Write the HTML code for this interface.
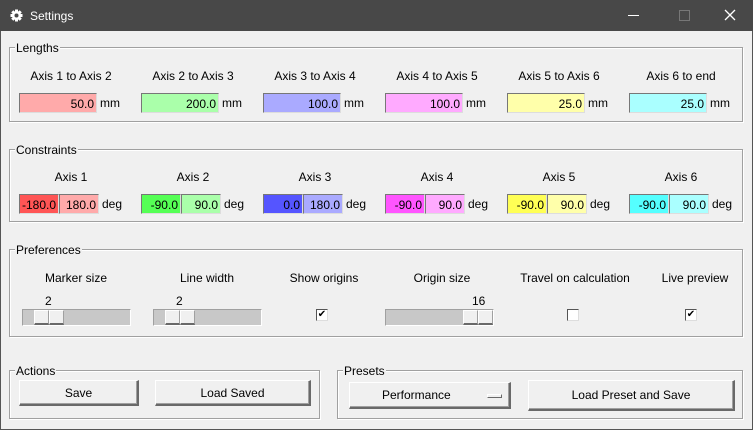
<!DOCTYPE html>
<html><head><style>
*{margin:0;padding:0;box-sizing:border-box}
body{width:753px;height:430px;background:#f0f0f0;font-family:"Liberation Sans",sans-serif;font-size:12px;color:#000;position:relative;overflow:hidden}
.a{position:absolute}
.tb{left:0;top:0;width:753px;height:31px;background:#484848;color:#fff}
.frame{left:0;top:31px;width:753px;height:399px;border:1px solid #555;border-top:none}
.grp{position:absolute;border:1px solid #a0a0a0;box-shadow:inset 1px 1px 0 #fff,1px 1px 0 #fff}
.gl{position:absolute;background:#f0f0f0;padding:0 1px;line-height:14px}
.lbl{position:absolute;text-align:center;width:122px;line-height:14px}
.e{position:absolute;height:20px;text-align:right;padding-right:2px;line-height:20px;border-top:1px solid #777;border-left:1px solid #777;border-bottom:1px solid #ddd;border-right:1px solid #ddd}
.u{position:absolute;line-height:21px}
.tr{position:absolute;height:17px;background:#c8c8c8;border-top:1px solid #a0a0a0;border-left:1px solid #a0a0a0;border-bottom:1px solid #fff;border-right:1px solid #fff}
.th{position:absolute;top:0;width:15px;height:15px;background:#f0f0f0;border-top:1px solid #fff;border-left:1px solid #fff;border-bottom:2px solid #696969;border-right:1px solid #a0a0a0}
.cb{position:absolute;width:12px;height:12px;background:#fff;border:1px solid #555;border-right-color:#ddd;border-bottom-color:#ddd;font-size:10px;line-height:10px;text-align:center}
.btn{position:absolute;background:#f0f0f0;border-top:1px solid #fff;border-left:1px solid #fff;border-right:2px solid #696969;border-bottom:2px solid #696969;text-align:center;box-shadow:inset -1px -1px 0 #a0a0a0}
</style></head><body>
<div class="a tb">
 <svg class="a" style="left:10px;top:9px" width="13" height="13" viewBox="0 0 13 13"><g fill="#fff"><circle cx="6.5" cy="6.5" r="4.5"/><rect x="5" y="0.5" width="3" height="12"/><rect x="0.5" y="5" width="12" height="3"/><rect x="5" y="0.5" width="3" height="12" transform="rotate(45 6.5 6.5)"/><rect x="5" y="0.5" width="3" height="12" transform="rotate(-45 6.5 6.5)"/></g><circle cx="6.5" cy="6.5" r="2" fill="#484848"/></svg>
 <div class="a" style="left:30px;top:9px;font-size:12px">Settings</div>
 <div class="a" style="left:628px;top:15px;width:11px;height:1px;background:#fff"></div>
 <div class="a" style="left:679px;top:10px;width:11px;height:11px;border:1px solid #777"></div>
 <svg class="a" style="left:724px;top:9px" width="12" height="12"><path d="M1 1L11 11M11 1L1 11" stroke="#fff" stroke-width="1.3"/></svg>
</div>
<div class="a frame"></div>

<div class="grp" style="left:9px;top:47px;width:734px;height:75px"></div>
<div class="gl" style="left:15px;top:41px">Lengths</div>
<div class="grp" style="left:9px;top:149px;width:734px;height:73px"></div>
<div class="gl" style="left:15px;top:143px">Constraints</div>
<div class="grp" style="left:9px;top:249px;width:734px;height:88px"></div>
<div class="gl" style="left:15px;top:243px">Preferences</div>
<div class="grp" style="left:9px;top:370px;width:311px;height:49px"></div>
<div class="gl" style="left:15px;top:364px">Actions</div>
<div class="grp" style="left:337px;top:370px;width:406px;height:49px"></div>
<div class="gl" style="left:343px;top:364px">Presets</div>

<div class="lbl" style="left:10px;top:69px">Axis 1 to Axis 2</div>
<div class="lbl" style="left:132px;top:69px">Axis 2 to Axis 3</div>
<div class="lbl" style="left:254px;top:69px">Axis 3 to Axis 4</div>
<div class="lbl" style="left:376px;top:69px">Axis 4 to Axis 5</div>
<div class="lbl" style="left:498px;top:69px">Axis 5 to Axis 6</div>
<div class="lbl" style="left:620px;top:69px">Axis 6 to end</div>
<div class="e" style="left:19px;top:93px;width:78px;background:#ffaaaa">50.0</div><div class="u" style="left:100px;top:93px">mm</div>
<div class="e" style="left:141px;top:93px;width:78px;background:#aaffaa">200.0</div><div class="u" style="left:222px;top:93px">mm</div>
<div class="e" style="left:263px;top:93px;width:78px;background:#aaaaff">100.0</div><div class="u" style="left:344px;top:93px">mm</div>
<div class="e" style="left:385px;top:93px;width:78px;background:#ffaaff">100.0</div><div class="u" style="left:466px;top:93px">mm</div>
<div class="e" style="left:507px;top:93px;width:78px;background:#ffffaa">25.0</div><div class="u" style="left:588px;top:93px">mm</div>
<div class="e" style="left:629px;top:93px;width:78px;background:#aaffff">25.0</div><div class="u" style="left:710px;top:93px">mm</div>

<div class="lbl" style="left:10px;top:170px">Axis 1</div>
<div class="lbl" style="left:132px;top:170px">Axis 2</div>
<div class="lbl" style="left:254px;top:170px">Axis 3</div>
<div class="lbl" style="left:376px;top:170px">Axis 4</div>
<div class="lbl" style="left:498px;top:170px">Axis 5</div>
<div class="lbl" style="left:620px;top:170px">Axis 6</div>
<div class="e" style="left:19px;top:194px;width:40px;background:#ff5555">-180.0</div><div class="e" style="left:59px;top:194px;width:40px;background:#ffaaaa">180.0</div><div class="u" style="left:102px;top:194px">deg</div>
<div class="e" style="left:141px;top:194px;width:40px;background:#55ff55">-90.0</div><div class="e" style="left:181px;top:194px;width:40px;background:#aaffaa">90.0</div><div class="u" style="left:224px;top:194px">deg</div>
<div class="e" style="left:263px;top:194px;width:40px;background:#5555ff">0.0</div><div class="e" style="left:303px;top:194px;width:40px;background:#aaaaff">180.0</div><div class="u" style="left:346px;top:194px">deg</div>
<div class="e" style="left:385px;top:194px;width:40px;background:#ff55ff">-90.0</div><div class="e" style="left:425px;top:194px;width:40px;background:#ffaaff">90.0</div><div class="u" style="left:468px;top:194px">deg</div>
<div class="e" style="left:507px;top:194px;width:40px;background:#ffff55">-90.0</div><div class="e" style="left:547px;top:194px;width:40px;background:#ffffaa">90.0</div><div class="u" style="left:590px;top:194px">deg</div>
<div class="e" style="left:629px;top:194px;width:40px;background:#55ffff">-90.0</div><div class="e" style="left:669px;top:194px;width:40px;background:#aaffff">90.0</div><div class="u" style="left:712px;top:194px">deg</div>

<div class="lbl" style="left:15px;top:271px">Marker size</div>
<div class="lbl" style="left:146px;top:271px">Line width</div>
<div class="lbl" style="left:263px;top:271px">Show origins</div>
<div class="lbl" style="left:381px;top:271px">Origin size</div>
<div class="lbl" style="left:514px;top:271px">Travel on calculation</div>
<div class="lbl" style="left:634px;top:271px">Live preview</div>
<div class="a" style="left:45px;top:294px">2</div>
<div class="a" style="left:176px;top:294px">2</div>
<div class="a" style="left:472px;top:294px">16</div>
<div class="tr" style="left:22px;top:309px;width:109px"><div class="th" style="left:11px"></div><div class="th" style="left:26px"></div></div>
<div class="tr" style="left:153px;top:309px;width:109px"><div class="th" style="left:11px"></div><div class="th" style="left:26px"></div></div>
<div class="tr" style="left:385px;top:309px;width:109px"><div class="th" style="left:77px"></div><div class="th" style="left:92px"></div></div>
<div class="cb" style="left:316px;top:309px">✔</div>
<div class="cb" style="left:567px;top:309px"></div>
<div class="cb" style="left:685px;top:309px">✔</div>

<div class="btn" style="left:19px;top:380px;width:120px;height:26px;line-height:24px">Save</div>
<div class="btn" style="left:155px;top:380px;width:156px;height:26px;line-height:24px">Load Saved</div>
<div class="btn" style="left:349px;top:382px;width:162px;height:27px;line-height:25px;text-align:left;padding-left:32px">Performance<div class="a" style="left:137px;top:11px;width:15px;height:4px;border:1px solid #fff;border-right-color:#696969;border-bottom-color:#696969"></div></div>
<div class="btn" style="left:528px;top:380px;width:207px;height:31px;line-height:29px">Load Preset and Save</div>
</body></html>
